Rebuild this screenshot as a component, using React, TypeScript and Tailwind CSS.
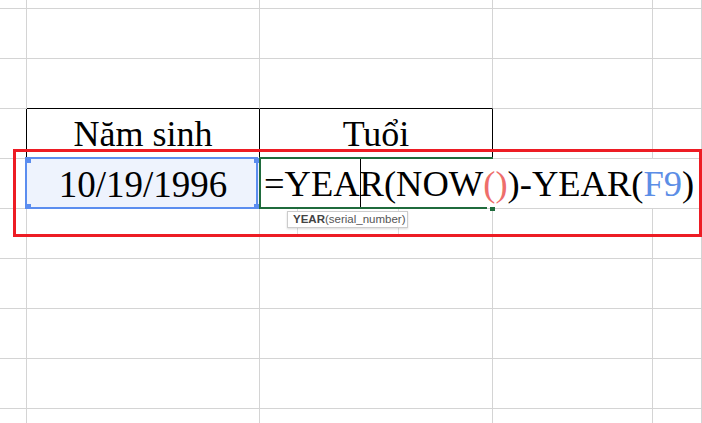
import React from "react";

const G = "border-[#d4d4d4]";

type CellProps = { w: string; cls?: string; children?: React.ReactNode };

function Cell({ w, cls = "", children }: CellProps) {
  return <div className={`${w} shrink-0 h-full border-r border-b ${cls}`}>{children}</div>;
}

function GridRow({ h, children }: { h: string; children: React.ReactNode }) {
  return <div className={`flex ${h} w-full`}>{children}</div>;
}

const WA = "w-[27px]";
const WB = "w-[233px]";
const WC = "w-[233px]";
const WD = "w-[160px]";
const WE = "flex-1 min-w-0";

function PlainRow({ h, bBlackBottom = false }: { h: string; bBlackBottom?: boolean }) {
  return (
    <GridRow h={h}>
      <Cell w={WA} cls={G} />
      <Cell w={WB} cls={`${G} ${bBlackBottom ? "!border-b-black" : ""}`} />
      <Cell w={WC} cls={`${G} ${bBlackBottom ? "!border-b-black" : ""}`} />
      <Cell w={WD} cls={G} />
      <Cell w={WE} cls={G} />
    </GridRow>
  );
}

const serif = { fontFamily: '"Liberation Serif", "Times New Roman", serif' };

export default function App() {
  return (
    <div className="relative w-[702px] h-[423px] overflow-hidden bg-white">
      <div className="flex flex-col w-full">
        <PlainRow h="h-[9px]" />
        <PlainRow h="h-[50px]" />
        <PlainRow h="h-[50px]" bBlackBottom />
        {/* header row */}
        <GridRow h="h-[50px]">
          <Cell w={WA} cls={`${G} !border-r-black`} />
          <Cell w={WB} cls="border-black">
            <div className="flex h-full items-center justify-center text-[36px] text-black" style={serif}>
              Năm sinh
            </div>
          </Cell>
          <Cell w={WC} cls="border-black">
            <div className="flex h-full items-center justify-center text-[36px] text-black" style={serif}>
              Tuổi
            </div>
          </Cell>
          <Cell w={WD} cls={G} />
          <Cell w={WE} cls={G} />
        </GridRow>
        {/* data row */}
        <GridRow h="h-[50px]">
          <Cell w={WA} cls={G} />
          <div className={`${WB} shrink-0 h-full border-r border-b ${G} bg-[#eef3fd] relative z-20`}>
            <div className="flex h-full items-center justify-center pt-[2px] text-[37px] text-black" style={serif}>
              10/19/1996
            </div>
            {/* blue selection */}
            <div className="absolute -left-[2px] -top-[2px] right-[1px] -bottom-[1px] border-2 border-[#5b8def]">
              <div className="absolute -left-[1px] -top-[1px] w-[5px] h-[5px] bg-[#5b8def]" />
              <div className="absolute -right-[3px] -top-[1px] w-[5px] h-[5px] bg-[#5b8def]" />
              <div className="absolute -left-[1px] -bottom-[2px] w-[5px] h-[5px] bg-[#5b8def]" />
              <div className="absolute -right-[3px] -bottom-[2px] w-[5px] h-[5px] bg-[#5b8def]" />
            </div>
          </div>
          <div className={`${WC} shrink-0 h-full border-b ${G} relative z-30`}>
            <div
              className="flex h-full items-center pl-[4px] pt-[1px] whitespace-nowrap text-[36.5px] text-black"
              style={serif}
            >
              <span className="shrink-0">=YEA</span>
              <span className="shrink-0 self-stretch w-px -mr-px -mt-[2px] bg-black" />
              <span className="shrink-0">R(NOW</span>
              <span className="shrink-0 text-[#ee6e6b]">()</span>
              <span className="shrink-0">)-YEAR(</span>
              <span className="shrink-0 text-[#5c8ee6]">F9</span>
              <span className="shrink-0">)</span>
            </div>
            {/* green editing border */}
            <div className="absolute -left-[1px] -top-[2px] right-0 h-[2px] bg-[#1f6b3c]" />
            <div className="absolute -left-[1px] -top-[2px] w-[2px] h-[52px] bg-[#1f6b3c]" />
            <div className="absolute -left-[1px] top-[48px] w-[228px] h-[2px] bg-[#1f6b3c] z-10" />
            <div className="absolute left-[230px] top-[48px] w-[5px] h-[4px] bg-[#1f6b3c] z-10" />
            {/* faint lines behind tooltip */}
            <div className="absolute left-[37px] top-[50px] w-px h-[27px] bg-[#dedede]" />
            <div className="absolute left-[138px] top-[50px] w-px h-[27px] bg-[#dedede]" />
            {/* function tooltip */}
            <div
              className="absolute left-[27px] top-[52px] w-[121px] h-[17px] bg-white border border-[#cccccc] shadow-[0_1px_2px_rgba(0,0,0,0.15)] flex items-center pl-[5px] text-[11.5px] leading-none text-[#555555] whitespace-nowrap"
              style={{ fontFamily: '"Liberation Sans", Arial, sans-serif' }}
            >
              <span className="font-bold text-[#444444]">YEAR</span>
              <span>(serial_number)</span>
            </div>
          </div>
          <div className={`${WD} shrink-0 h-full border-b ${G}`} />
          <Cell w={WE} cls={G} />
        </GridRow>
        <PlainRow h="h-[50px]" />
        <PlainRow h="h-[50px]" />
        <PlainRow h="h-[50px]" />
        <PlainRow h="h-[50px]" />
        <PlainRow h="h-[20px]" />
      </div>

      {/* red annotation box */}
      <div className="absolute left-[13px] top-[149px] w-[689px] h-[88px] border-[3px] border-[#ed1c24] z-40" />
    </div>
  );
}
